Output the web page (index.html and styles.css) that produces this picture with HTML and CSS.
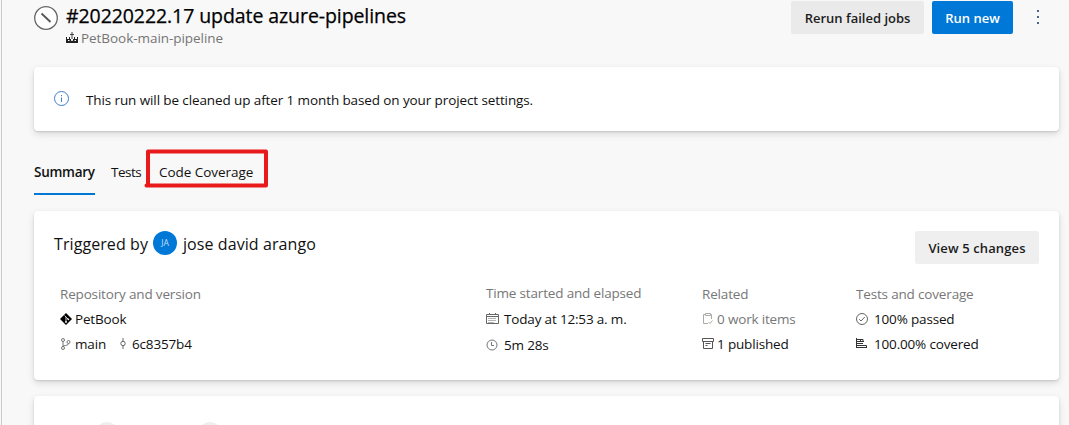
FILE: index.html
```html
<!DOCTYPE html>
<html lang="en">
<head>
<meta charset="utf-8">
<title>#20220222.17 update azure-pipelines</title>
<link rel="stylesheet" href="styles.css">
</head>
<body>
<main class="page">
  <header class="header">
    <svg class="status-icon" width="24" height="24" viewBox="0 0 24 24"><circle cx="12" cy="12" r="11.3" fill="#fff" stroke="#666" stroke-width="1.3"/><path d="M7.500 7.500l9 8.500" stroke="#555" stroke-width="1.8"/></svg>
    <div class="heading">
      <h1 class="title">#20220222.17 update azure-pipelines</h1>
      <div class="pipeline">
        <svg width="12" height="12" viewBox="0 0 12 12"><path d="M0 5h1v2h2V5h1v2h1v1h2V7h1V5h1v2h2V5h1v6H0z" fill="#222"/><path d="M6 0v7M4 2.500h4" stroke="#444"/><path d="M2 8.500h1.500M5.200 8.500h1.600M8.500 8.500H10" stroke="#f8f8f8"/></svg>
        <span class="pipeline-name">PetBook-main-pipeline</span>
      </div>
    </div>
    <div class="actions">
      <button class="button rerun">Rerun failed jobs</button>
      <button class="button primary">Run new</button>
      <svg class="more" width="4" height="16" viewBox="0 0 4 16" fill="#4a6585"><path d="M1 1h2v2H1zM1 7h2v2H1zM1 13h2v2H1z"/></svg>
    </div>
  </header>

  <section class="card notice">
    <svg width="16" height="16" viewBox="0 0 16 16" fill="none" stroke="#3b7fd0"><circle cx="7.500" cy="7.500" r="7"/><path d="M7.500 6.500V11M7.500 4v1.200"/></svg>
    <span class="notice-text">This run will be cleaned up after 1 month based on your project settings.</span>
  </section>

  <nav class="tabs">
    <span class="tab active">Summary</span>
    <span class="tab tests">Tests</span>
    <span class="tab coverage">Code Coverage
      <svg class="marker" width="125" height="40" viewBox="0 0 125 40" fill="none" stroke="#e81a1c" stroke-width="4"><path d="M4 37.500V3.500H122V37.500H2.500" stroke-linejoin="round" stroke-linecap="round"/></svg>
    </span>
  </nav>

  <section class="card summary">
    <div class="trigger">
      <span class="trigger-by">Triggered by</span>
      <span class="avatar">JA</span>
      <span class="user">jose david arango</span>
      <button class="button changes">View 5 changes</button>
    </div>
    <div class="details">
      <div class="column">
        <div class="label repo-label">Repository and version</div>
        <div class="row">
          <svg class="icon" width="12" height="12" viewBox="0 0 12 12"><path d="M6 0l6 6-6 6-6-6z" fill="#000"/><path d="M4.500 2.500L6 4v5M6 4l2.300 2.300" fill="none" stroke="#fff" stroke-width=".8"/><circle cx="6" cy="9" r=".9" fill="#fff"/><circle cx="8.300" cy="6.300" r=".9" fill="#fff"/></svg>
          <span class="petbook">PetBook</span>
        </div>
        <div class="row">
          <svg class="icon" width="12" height="12" viewBox="0 0 12 12" fill="none" stroke="#666" stroke-width=".9"><circle cx="3" cy="2" r="1.500"/><circle cx="3" cy="10" r="1.500"/><circle cx="8.500" cy="4" r="1.500"/><path d="M3 3.500v5M8.500 5.500Q8.300 7.500 5.500 7.500Q3.500 7.500 3 8.500"/></svg>
          <span class="main">main</span>
          <svg class="commit" width="6" height="12" viewBox="0 0 6 12" fill="none" stroke="#666"><circle cx="3" cy="5.500" r="2.200"/><path d="M3 0v3.300M3 7.700V11"/></svg>
          <span class="hash">6c8357b4</span>
        </div>
      </div>
      <div class="column times">
        <div class="label time-label">Time started and elapsed</div>
        <div class="row">
          <svg class="icon" width="13" height="12" viewBox="0 0 13 12" fill="none" stroke="#666"><path d="M.5 1.500h12v9H.5zM.5 3.500h12M3.500 0v2M9.500 0v2"/><path d="M2.500 5.500h8M2.500 7.500h8M2.500 9.500h6" stroke-dasharray="1 1"/></svg>
          <span class="today">Today at 12:53 a. m.</span>
        </div>
        <div class="row elapsed">
          <svg class="icon" width="12" height="12" viewBox="0 0 12 12" fill="none" stroke="#777"><circle cx="6" cy="6" r="5"/><path d="M5.500 3v3.500H8"/></svg>
          <span class="duration">5m 28s</span>
        </div>
      </div>
      <div class="column related">
        <div class="label related-label">Related</div>
        <div class="row muted">
          <svg class="icon" width="12" height="13" viewBox="0 0 12 13" fill="none" stroke="#aaa"><path d="M6 11.500H1.500v-9h2M8.500 2.500h1V7M3.500 1.500h5v2h-5zM6.500 10l1.500 1.500 2.500-3"/></svg>
          <span class="items">0 work items</span>
        </div>
        <div class="row">
          <svg class="icon" width="12" height="11" viewBox="0 0 12 11" fill="none" stroke="#555"><path d="M.5.500h11v3H.500zM1.500 3.500v7h9v-7M3.500 5.500h5M3.500 7.500h2"/></svg>
          <span class="published">1 published</span>
        </div>
      </div>
      <div class="column tests-column">
        <div class="label tests-label">Tests and coverage</div>
        <div class="row">
          <svg class="icon" width="12" height="12" viewBox="0 0 12 12" fill="none" stroke="#555" stroke-width=".9"><circle cx="6" cy="6" r="5.500"/><path d="M3.200 6.200l1.800 1.800 3.800-4"/></svg>
          <span class="passed">100% passed</span>
        </div>
        <div class="row">
          <svg class="icon" width="12" height="11" viewBox="0 0 12 11" fill="none" stroke="#333"><path d="M.5 0v10M0 9.500h11M1 1.500h6v2M1 3.500h7M1 5.500h6M1 7.500h9.500v2M4.500 1.500v2"/></svg>
          <span class="covered">100.00% covered</span>
        </div>
      </div>
    </div>
  </section>

  <section class="card stages">
    <span class="stage-dot"></span>
    <span class="stage-dot"></span>
  </section>
</main>
</body>
</html>
```

FILE: styles.css
```css
* { box-sizing: border-box; }
body {
  margin: 0;
  height: 425px;
  overflow: hidden;
  background: #f8f8f8;
  color: #111;
  font: 13.500px/20px "Open Sans", "Noto Sans", sans-serif;
}
svg { display: block; flex: none; }
span, h1 { white-space: nowrap; }
.page {
  height: 425px;
  margin-left: 1px;
  padding: 0 10px 0 32px;
  border-left: 1px solid #ccc;
  overflow: hidden;
}
.header { display: flex; height: 67px; margin-left: -1px; }
.status-icon { margin: 6px 0 0 1px; }
.heading { margin-left: 8px; }
.title { margin: 2px 0 0; font-size: 19.500px; line-height: 28px; font-weight: 500; letter-spacing: -.08px; color: #000; -webkit-text-stroke: .25px #000; }
.pipeline { display: flex; align-items: center; height: 16px; color: #757575; }
.pipeline-name { margin-left: 3px; letter-spacing: -.05px; }
.actions { display: flex; align-items: flex-start; margin-left: auto; padding: 1px 19px 0 0; }
.button {
  height: 33px;
  padding: 0;
  border: 0;
  border-radius: 2px;
  background: #efefef;
  color: #1c1c1c;
  font: 600 13px/33px "Open Sans", sans-serif;
  white-space: nowrap;
}
.rerun { width: 133px; background: #eaeaea; line-height: 34px; }
.primary { width: 81px; margin-left: 8px; background: #0078d7; color: #fff; line-height: 34px; }
.more { margin: 8px 0 0 23px; }
.card {
  background: #fff;
  border-radius: 4px;
  box-shadow: 0 3px 7px rgba(0, 0, 0, .13), 0 1px 2px rgba(0, 0, 0, .12);
}
.notice { display: flex; height: 64px; padding: 24px 0 0 20px; }
.notice-text { margin: -1px 0 0 16px; letter-spacing: -.108px; }
.tabs { display: flex; height: 64px; padding-top: 27px; }
.tab { height: 37px; line-height: 29px; }
.active { width: 61px; border-bottom: 2px solid #0078d4; font-weight: 600; letter-spacing: -.28px; }
.tests { margin-left: 16px; width: 31px; letter-spacing: -.5px; }
.coverage { position: relative; margin-left: 17px; letter-spacing: -.04px; }
.marker { position: absolute; left: -15px; top: -10px; }
.summary { height: 169px; margin-top: 16px; padding: 20px 20px 0; }
.trigger { display: flex; height: 33px; font-size: 16px; line-height: 26px; }
.trigger-by { width: 94px; letter-spacing: .08px; }
.avatar {
  width: 24px;
  height: 24px;
  margin-left: 5px;
  border-radius: 50%;
  background: #0078d7;
  color: #c5dff5;
  font-size: 8.500px;
  line-height: 24px;
  text-align: center;
}
.user { margin-left: 6px; letter-spacing: .08px; }
.changes { width: 124px; margin-left: auto; line-height: 34px; letter-spacing: .12px; }
.details { display: grid; grid-template-columns: 426px 216px 154px 1fr; padding: 18px 0 0 6px; letter-spacing: -.17px; }
.label { height: 25px; line-height: 24px; color: #777; white-space: nowrap; }
.time-label { line-height: 23px; }
.row { display: flex; align-items: center; height: 25px; line-height: 25px; color: #111; }
.row .icon { margin-top: -2px; }
.row .icon + span { margin-left: 3px; }
.commit { margin: -2px 0 0 14px; }
.hash { margin-left: 6px; }
.times .icon + .today { margin-left: 5px; }
.times .icon + .duration { margin-left: 6px; }
.elapsed { margin-top: 1px; }
.tests-column .icon + span { margin-left: 6px; }
.row.muted { color: #777; }
.stages { display: flex; height: 60px; margin-top: 16px; padding: 26px 0 0 61px; gap: 79px; }
.stage-dot { width: 24px; height: 24px; border-radius: 50%; background: #eee; }
```
